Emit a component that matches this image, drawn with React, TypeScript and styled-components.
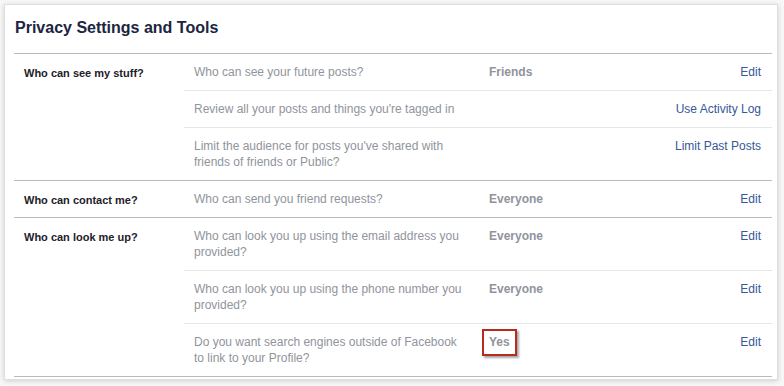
import styled, { createGlobalStyle } from "styled-components";

const GlobalStyle = createGlobalStyle`
  html, body {
    margin: 0;
    padding: 0;
    background: #ffffff;
  }
  body {
    font-family: "Liberation Sans", Arial, sans-serif;
    -webkit-font-smoothing: antialiased;
  }
`;

type Setting = {
  question: string;
  value?: string;
  action: string;
  highlight?: boolean;
};

type Section = {
  label: string;
  settings: Setting[];
};

const sections: Section[] = [
  {
    label: "Who can see my stuff?",
    settings: [
      { question: "Who can see your future posts?", value: "Friends", action: "Edit" },
      {
        question: "Review all your posts and things you're tagged in",
        action: "Use Activity Log",
      },
      {
        question:
          "Limit the audience for posts you've shared with friends of friends or Public?",
        action: "Limit Past Posts",
      },
    ],
  },
  {
    label: "Who can contact me?",
    settings: [
      { question: "Who can send you friend requests?", value: "Everyone", action: "Edit" },
    ],
  },
  {
    label: "Who can look me up?",
    settings: [
      {
        question: "Who can look you up using the email address you provided?",
        value: "Everyone",
        action: "Edit",
      },
      {
        question: "Who can look you up using the phone number you provided?",
        value: "Everyone",
        action: "Edit",
      },
      {
        question: "Do you want search engines outside of Facebook to link to your Profile?",
        value: "Yes",
        action: "Edit",
        highlight: true,
      },
    ],
  },
];

const App = () => {
  return (
    <>
      <GlobalStyle />
      <Page>
        <Card>
          <Title>Privacy Settings and Tools</Title>
          <Table>
            {sections.map((section) => (
              <SectionRow key={section.label}>
                <SectionLabel>{section.label}</SectionLabel>
                <SettingList>
                  {section.settings.map((item) => (
                    <SettingRow key={item.question}>
                      <Question>{item.question}</Question>
                      <ValueCell>
                        {item.value && (
                          <Value $highlight={item.highlight}>{item.value}</Value>
                        )}
                      </ValueCell>
                      <Action href="#">{item.action}</Action>
                    </SettingRow>
                  ))}
                </SettingList>
              </SectionRow>
            ))}
          </Table>
        </Card>
      </Page>
    </>
  );
};

const Page = styled.div`
  width: 784px;
  height: 386px;
  padding: 4px 6px 6px 4px;
  box-sizing: border-box;
  background: #f7f7f7;
`;

const Card = styled.div`
  background: #ffffff;
  border: 1px solid #dedede;
  box-shadow: 0 1px 5px rgba(0, 0, 0, 0.16);
  padding: 0 5px 4px 9px;
  height: 376px;
  box-sizing: border-box;
`;

const Title = styled.h1`
  margin: 0;
  padding: 14px 0 0 1px;
  height: 49px;
  box-sizing: border-box;
  font-size: 16px;
  font-weight: bold;
  color: #1c2541;
  border-bottom: 1px solid #b9bbbe;
`;

const Table = styled.div`
  display: flex;
  flex-direction: column;
`;

const SectionRow = styled.div`
  display: grid;
  grid-template-columns: 170px 1fr;
  border-bottom: 1px solid #b9bbbe;
`;

const SectionLabel = styled.div`
  padding: 11px 0 0 10px;
  font-size: 11px;
  font-weight: bold;
  color: #1d2129;
  line-height: 16px;
`;

const SettingList = styled.div`
  display: flex;
  flex-direction: column;
`;

const SettingRow = styled.div`
  display: grid;
  grid-template-columns: 295px 1fr auto;
  align-items: start;
  padding: 10px 11px 10px 10px;
  border-top: 1px solid #e5e6e9;
  font-size: 12px;
  line-height: 16px;

  &:first-child {
    border-top: none;
  }
`;

const Question = styled.div`
  color: #90949c;
  padding-right: 25px;
`;

const ValueCell = styled.div`
  min-height: 16px;
`;

const Value = styled.span<{ $highlight?: boolean }>`
  display: inline-block;
  font-weight: bold;
  color: #90949c;
  ${({ $highlight }) =>
    $highlight
      ? `
    margin: -5px 0 0 -7px;
    padding: 3px 5px 4px 5px;
    border: 2px solid #b52c1e;
    box-shadow: 2px 2px 2px rgba(0, 0, 0, 0.35);
  `
      : ""}
`;

const Action = styled.a`
  color: #365899;
  text-decoration: none;
  text-align: right;
  white-space: nowrap;
`;

export default App;
